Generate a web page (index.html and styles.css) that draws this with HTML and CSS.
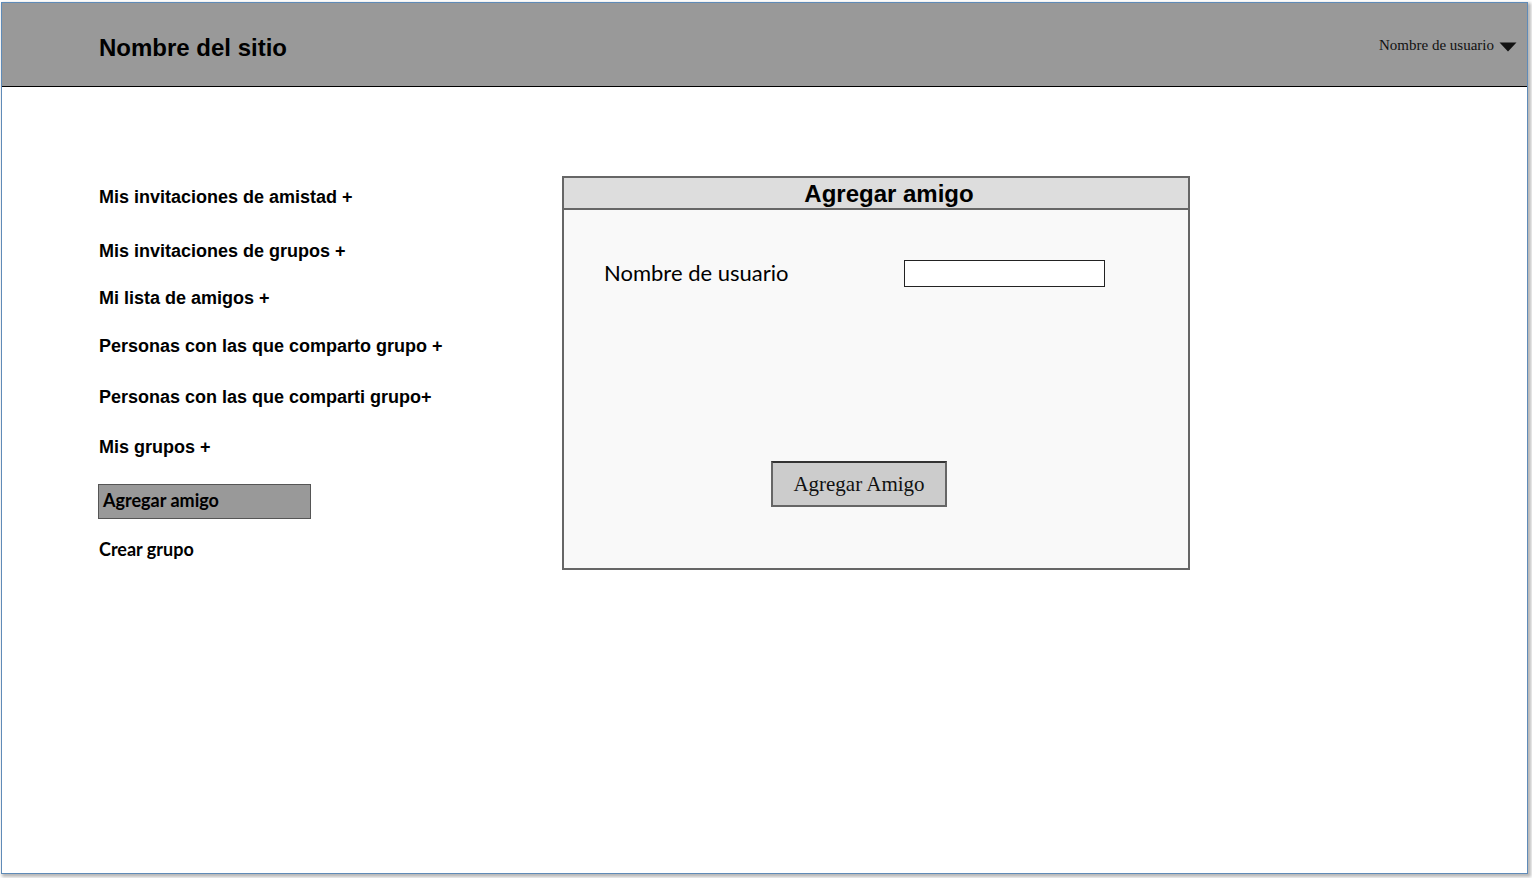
FILE: index.html
```html
<!DOCTYPE html>
<html lang="es">
<head>
<meta charset="utf-8">
<title>Agregar amigo</title>
<link rel="stylesheet" href="styles.css">
</head>
<body>
<div class="window">
  <header class="topbar">
    <div class="site-name">Nombre del sitio</div>
    <div class="user-menu">
      <span class="user-name">Nombre de usuario</span>
      <svg class="caret" width="18" height="10" viewBox="0 0 18 10"><polygon points="0.5,0.5 17.5,0.5 9,9.5" fill="#111"/></svg>
    </div>
  </header>
  <main class="content">
    <nav class="sidebar">
      <div class="nav-item i1">Mis invitaciones de amistad +</div>
      <div class="nav-item i2">Mis invitaciones de grupos +</div>
      <div class="nav-item i3">Mi lista de amigos +</div>
      <div class="nav-item i4">Personas con las que comparto grupo +</div>
      <div class="nav-item i5">Personas con las que comparti grupo+</div>
      <div class="nav-item i6">Mis grupos +</div>
      <div class="nav-link active">Agregar amigo</div>
      <div class="nav-link plain">Crear grupo</div>
    </nav>
    <section class="panel">
      <div class="panel-title">Agregar amigo</div>
      <div class="panel-body">
        <div class="form-row">
          <label class="form-label">Nombre de usuario</label>
          <div class="text-input"></div>
        </div>
        <div class="btn">Agregar Amigo</div>
      </div>
    </section>
  </main>
</div>
</body>
</html>
```
FILE: styles.css
```css
html, body {
  margin: 0;
  padding: 0;
  background: #ffffff;
}
body {
  padding: 2px 0 0 1px;
  width: 1532px;
  height: 878px;
  box-sizing: border-box;
  overflow: hidden;
}
.window {
  box-sizing: border-box;
  width: 1527px;
  height: 872px;
  border: 1px solid #5f8bb8;
  box-shadow: 2px 2px 3px 1px #b8b8b8;
  background: #ffffff;
  display: flex;
  flex-direction: column;
}
.topbar {
  height: 83px;
  background: #999999;
  border-bottom: 1px solid #000000;
  display: flex;
  align-items: center;
  justify-content: space-between;
  padding: 0 10px 0 97px;
  flex: none;
}
.site-name {
  font-family: "Liberation Sans", Arial, sans-serif;
  font-weight: bold;
  font-size: 24px;
  color: #000;
  padding-top: 6px;
}
.user-menu {
  display: flex;
  align-items: center;
  gap: 5px;
  padding-top: 2px;
}
.user-name {
  font-family: "Liberation Serif", "Times New Roman", serif;
  font-size: 15px;
  color: #111;
}
.caret {
  display: block;
  margin-top: 2px;
}
.content {
  display: flex;
  padding: 89px 0 0 97px;
}
.sidebar {
  width: 463px;
  display: flex;
  flex-direction: column;
  align-items: flex-start;
  flex: none;
}
.nav-item {
  font-family: "Liberation Sans", Arial, sans-serif;
  font-weight: bold;
  font-size: 18px;
  line-height: 20px;
  color: #000;
}
.i1 { margin-top: 11px; }
.i2 { margin-top: 34px; }
.i3 { margin-top: 27px; }
.i4 { margin-top: 28px; }
.i5 { margin-top: 31px; }
.i6 { margin-top: 30px; }
.nav-link {
  font-family: Lato, "Open Sans", sans-serif;
  font-weight: bold;
  font-size: 18px;
  line-height: 20px;
  color: #000;
}
.nav-link.active {
  box-sizing: border-box;
  margin-top: 27px;
  margin-left: -1px;
  width: 213px;
  height: 35px;
  background: #999999;
  border: 1px solid #555555;
  padding: 5px 0 0 4px;
}
.nav-link.plain {
  margin-top: 20px;
}
.panel {
  box-sizing: border-box;
  width: 628px;
  height: 394px;
  border: 2px solid #666666;
  background: #f9f9f9;
  display: flex;
  flex-direction: column;
}
.panel-title {
  height: 30px;
  background: #dddddd;
  border-bottom: 2px solid #666666;
  text-align: center;
  padding-left: 26px;
  font-family: "Liberation Sans", Arial, sans-serif;
  font-weight: bold;
  font-size: 24px;
  line-height: 31px;
  color: #000;
}
.panel-body {
  padding: 50px 0 0 40px;
  display: flex;
  flex-direction: column;
  align-items: flex-start;
}
.form-row {
  display: flex;
  align-items: center;
}
.form-label {
  width: 300px;
  font-family: Lato, "Open Sans", sans-serif;
  font-size: 22px;
  line-height: 26px;
  color: #000;
  margin-top: -2px;
}
.text-input {
  box-sizing: border-box;
  width: 201px;
  height: 27px;
  background: #ffffff;
  border: 1px solid #222222;
}
.btn {
  box-sizing: border-box;
  margin: 174px 0 0 167px;
  width: 176px;
  height: 46px;
  background: #cccccc;
  border: 2px solid #666666;
  border-top-color: #333333;
  display: flex;
  align-items: center;
  justify-content: center;
  font-family: "Liberation Serif", "Times New Roman", serif;
  font-size: 21px;
  color: #111;
}
```
